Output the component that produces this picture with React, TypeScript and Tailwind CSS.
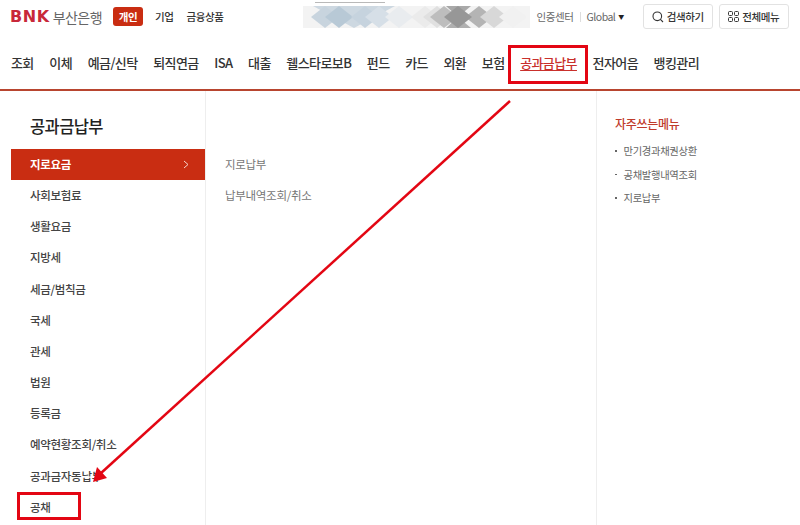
const font = "font-['Noto_Sans_CJK_KR','Noto_Sans',sans-serif]";

const navItems = [
  "조회",
  "이체",
  "예금/신탁",
  "퇴직연금",
  "ISA",
  "대출",
  "웰스타로보B",
  "펀드",
  "카드",
  "외환",
  "보험",
  "공과금납부",
  "전자어음",
  "뱅킹관리",
];

const sideItems = [
  "사회보험료",
  "생활요금",
  "지방세",
  "세금/범칙금",
  "국세",
  "관세",
  "법원",
  "등록금",
  "예약현황조회/취소",
  "공과금자동납부",
  "공채",
];

const favorites = ["만기경과채권상환", "공채발행내역조회", "지로납부"];

// diamond centre and fill for the blurred banner
const diamonds: [number, string][] = [
  [22, "#c8d4de"],
  [36, "#b8c9d6"],
  [62, "#c6d3de"],
  [76, "#d6dfe7"],
  [96, "#e9ecef"],
  [122, "#ebebeb"],
  [134, "#e0e0e0"],
  [141, "#bdbdbd"],
  [176, "#b4b4b4"],
  [191, "#d8d8d8"],
  [155, "#979797"],
  [210, "#f1f1f1"],
];

const Banner = () => (
  <svg width="227" height="26" viewBox="0 0 227 26" className="blur-[0.6px]">
    <rect x="12" y="0" width="70" height="1" fill="#b9b9b9" />
    <rect x="0" y="4" width="227" height="22" fill="#f3f3f3" />
    <polygon points="10,4 92,4 51,26" fill="#cdd8e1" />
    <polygon points="143,4 168,4 155,15" fill="#a9a9a9" />
    <polygon points="143,26 168,26 155,15" fill="#b0b0b0" />
    {diamonds.map(([cx, fill]) => (
      <polygon
        key={cx}
        points={`${cx - 14},15 ${cx},4 ${cx + 14},15 ${cx},26`}
        fill={fill}
      />
    ))}
  </svg>
);

export default function App() {
  return (
    <div className={`relative h-[525px] w-[800px] overflow-hidden bg-white ${font}`}>
      <header className="flex h-[33px] items-center pl-[10px]">
        <span className="font-['DejaVu_Sans',sans-serif] text-[16px] font-bold leading-none tracking-[0.6px] text-[#c8283a]">
          BNK
        </span>
        <span className="ml-[3px] text-[14px] leading-none tracking-[-0.6px] text-[#666]">부산은행</span>
        <span className="ml-[11px] flex h-[19px] w-[30px] items-center justify-center rounded-[3px] bg-[#c92d12] text-[10.5px] font-bold tracking-[-0.4px] text-white">
          개인
        </span>
        <span className="ml-[12px] text-[10.5px] font-medium tracking-[-0.4px] text-[#333]">기업</span>
        <span className="ml-[13px] text-[10.5px] font-medium tracking-[-0.4px] text-[#333]">금융상품</span>
        <div className="ml-[79px] -mt-[4px]">
          <Banner />
        </div>
        <span className="ml-[7px] text-[10.5px] tracking-[-0.4px] text-[#666]">인증센터</span>
        <span className="mx-[6px] h-[10px] w-px bg-[#ddd]" />
        <span className="flex items-center text-[10.5px] tracking-[-0.5px] text-[#666]">
          Global
          <span className="ml-[3px] text-[6px] text-[#222]">▼</span>
        </span>
        <button className="ml-[19px] flex h-[25px] w-[70px] items-center justify-center gap-[3px] rounded-[3px] border border-[#e2e2e2] text-[10.5px] font-medium tracking-[-0.4px] text-[#333]">
          <svg width="12" height="12" viewBox="0 0 12 12" fill="none" stroke="#333" strokeWidth="1.1">
            <circle cx="5.3" cy="5.3" r="4.3" />
            <path d="M8.4 8.4 L11 11" />
          </svg>
          검색하기
        </button>
        <button className="ml-[6px] flex h-[25px] w-[70px] items-center justify-center gap-[3px] rounded-[3px] border border-[#e2e2e2] text-[10.5px] font-medium tracking-[-0.4px] text-[#333]">
          <svg width="11" height="11" viewBox="0 0 11 11" fill="none" stroke="#333" strokeWidth="1">
            <rect x="0.5" y="0.5" width="4" height="4" rx="1" />
            <rect x="6.5" y="0.5" width="4" height="4" rx="1" />
            <rect x="0.5" y="6.5" width="4" height="4" rx="1" />
            <rect x="6.5" y="6.5" width="4" height="4" rx="1" />
          </svg>
          전체메뉴
        </button>
      </header>

      <nav className="flex h-[58px] items-center gap-[15.6px] border-b-2 border-[#b8452f] pl-[11px] pt-[3px]">
        {navItems.map((item) => (
          <span
            key={item}
            className={`text-[13px] font-medium tracking-[-0.6px] ${
              item === "공과금납부" ? "text-[#c9302c] underline underline-offset-2" : "text-[#333]"
            }`}
          >
            {item}
          </span>
        ))}
      </nav>

      <main className="flex h-[434px]">
        <aside className="w-[206px] shrink-0 border-r border-[#eeeeee] pl-[11px]">
          <h2 className="flex h-[58px] items-center pl-[19px] pt-[13px] text-[16.5px] font-medium tracking-[-0.6px] text-[#222]">
            공과금납부
          </h2>
          <div className="flex h-[31px] items-center justify-between bg-[#c92d12] pl-[19px] pr-[16px] text-[11.5px] font-bold tracking-[-0.3px] text-white">
            지로요금
            <svg width="6" height="9" viewBox="0 0 6 9" fill="none" stroke="#f6d5cc" strokeWidth="1">
              <path d="M1 1 L5 4.5 L1 8" />
            </svg>
          </div>
          <ul>
            {sideItems.map((item) => (
              <li
                key={item}
                className="flex h-[31.2px] items-center pl-[19px] text-[11.5px] font-medium tracking-[-0.3px] text-[#444]"
              >
                {item}
              </li>
            ))}
          </ul>
        </aside>

        <section className="w-[391px] shrink-0 border-r border-[#eeeeee] pl-[19px] pt-[58px] text-[11.5px] tracking-[-0.3px] text-[#777]">
          <div className="flex h-[31px] items-center">지로납부</div>
          <div className="flex h-[31px] items-center">납부내역조회/취소</div>
        </section>

        <section className="pl-[18px] pt-[25px]">
          <h3 className="text-[12px] font-medium leading-[16px] tracking-[-0.3px] text-[#bf3b2b]">자주쓰는메뉴</h3>
          <ul className="mt-[7px]">
            {favorites.map((item) => (
              <li key={item} className="flex h-[23.5px] items-center text-[10.3px] tracking-[-0.3px] text-[#666]">
                <span className="mr-[7px] h-[1.5px] w-[1.5px] bg-[#666]" />
                {item}
              </li>
            ))}
          </ul>
        </section>
      </main>

      {/* red annotations drawn over the page */}
      <div className="absolute left-[508px] top-[45px] h-[39px] w-[80px] border-[3px] border-[#e30613]" />
      <div className="absolute left-[17px] top-[492px] h-[28px] w-[64px] border-[3px] border-[#e30613]" />
      <svg className="absolute left-0 top-0" width="800" height="525" viewBox="0 0 800 525" fill="none">
        <path d="M510 101 L100 474" stroke="#e30613" strokeWidth="2.5" />
        <polygon points="93,482 97,467 107,478" fill="#e30613" />
      </svg>
    </div>
  );
}
